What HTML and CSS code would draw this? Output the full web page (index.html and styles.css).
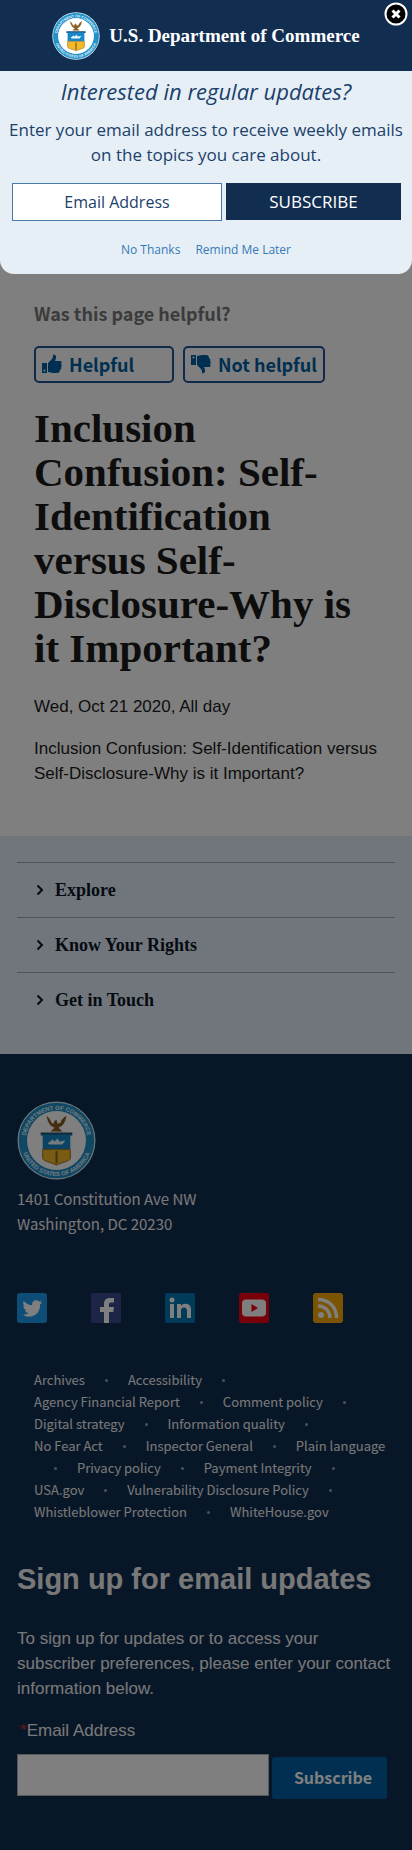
FILE: index.html
```html
<!DOCTYPE html>
<html lang="en">
<head>
<meta charset="utf-8">
<meta name="viewport" content="width=device-width, initial-scale=1">
<title>U.S. Department of Commerce</title>
<link rel="stylesheet" href="styles.css">
</head>
<body>
<svg class="defs" aria-hidden="true">
  <symbol id="seal" class="seal" viewBox="0 0 80 80">
    <circle cx="40" cy="40" r="39.5" fill="#d9eef8"/>
    <circle cx="40" cy="40" r="34" fill="none" stroke="#2191c9" stroke-width="8.5"/>
    <path id="arc-top" d="M9 46A31.500 31.500 0 1 1 71 46" fill="none"/>
    <path id="arc-bottom" d="M5 49A36.200 36.200 0 0 0 75 49" fill="none"/>
    <text class="seal-text"><textPath href="#arc-top" startOffset="50%">DEPARTMENT OF COMMERCE</textPath></text>
    <text class="seal-text"><textPath href="#arc-bottom" startOffset="50%">UNITED STATES OF AMERICA</textPath></text>
    <circle cx="40" cy="40" r="29.5" fill="#fff"/>
    <path d="M30 15c1 7 4 11 8 12l-4 4h12l-4-4c4-1 7-5 8-12-3 2-5 4-6 7l-3 1-1-4-2 1-1 3-2-1c-1-3-3-5-5-7z" fill="#8a5b20"/>
    <path d="M24 32h32v3H24z" fill="#24557c"/>
    <path d="M26 34h28v15H26z" fill="#1787c9"/>
    <path d="M26 49h28v9c0 3-9 4-14 7-5-3-14-4-14-7z" fill="#f2b928" stroke="#9b711c" stroke-width="1"/>
    <path d="M39 51h2v12h-2z" fill="#8a5b20"/>
    <path d="M31 43l5-4 2 2 3-3 2 3 6-1-3 4H33z" fill="#e8f6fd"/>
  </symbol>
</svg>

<div class="page">
  <main class="content">
    <p class="question">Was this page helpful?</p>
    <div class="votes">
      <button class="vote" type="button">
        <svg class="thumb" viewBox="0 0 20 20" aria-hidden="true"><path d="M0 9h5v10H0z M6 9l4-4c1-1 1-3 1-4 3-1 4 2 2 6h5c2 0 2 2 1 3 1 1 1 2 0 3 1 1 0 2-1 3 0 2-1 3-3 3h-4c-2 0-3-1-5-1z"/><circle cx="2.500" cy="16.500" r="1" class="pin"/></svg>
        Helpful
      </button>
      <button class="vote" type="button">
        <svg class="thumb" viewBox="0 0 20 20" aria-hidden="true"><path d="M0 1h5v10H0z M6 11l4 4c1 1 1 3 1 4 3 1 4-2 2-6h5c2 0 2-2 1-3 1-1 1-2 0-3 1-1 0-2-1-3 0-2-1-3-3-3h-4c-2 0-3 1-5 1z"/><circle cx="2.500" cy="3.500" r="1" class="pin"/></svg>
        Not helpful
      </button>
    </div>
    <h1 class="title">Inclusion Confusion: Self-Identification versus Self-Disclosure-Why is it Important?</h1>
    <p class="text">Wed, Oct 21 2020, All day</p>
    <p class="text">Inclusion Confusion: Self-Identification versus Self-Disclosure-Why is it Important?</p>
  </main>

  <nav class="menu" aria-label="Footer sections">
    <button class="menu-item" type="button"><svg class="chevron" viewBox="0 0 8 12" aria-hidden="true"><path d="M1.500 1.500L6 6l-4.500 4.500"/></svg>Explore</button>
    <button class="menu-item" type="button"><svg class="chevron" viewBox="0 0 8 12" aria-hidden="true"><path d="M1.500 1.500L6 6l-4.500 4.500"/></svg>Know Your Rights</button>
    <button class="menu-item" type="button"><svg class="chevron" viewBox="0 0 8 12" aria-hidden="true"><path d="M1.500 1.500L6 6l-4.500 4.500"/></svg>Get in Touch</button>
  </nav>

  <footer class="footer">
    <svg class="footer-seal" role="img" aria-label="Department of Commerce seal"><use href="#seal"/></svg>
    <address class="address">1401 Constitution Ave NW<br>Washington, DC 20230</address>
    <div class="social">
      <a href="#" aria-label="Twitter"><svg viewBox="0 0 30 30"><rect width="30" height="30" rx="3" fill="#1d9bf0"/><path d="M25 9c-1 .4-1.600.6-2.300.6.900-.5 1.400-1.200 1.700-2.200-.8.500-1.600.8-2.500 1-2.600-2.600-7.500-.7-6.700 3.800-3.300-.1-6.200-1.700-8.400-4.300-1.200 2-.6 4.300 1.300 5.600-.7 0-1.300-.2-1.800-.5 0 2 1.400 3.700 3.300 4.100-.6.200-1.200.2-1.800.1.500 1.600 2 2.800 3.800 2.800-1.700 1.300-3.700 1.900-6 1.700 8 4.900 17.800.2 17.500-10.200.8-.6 1.500-1.400 1.900-2.500z" fill="#fff"/></svg></a>
      <a href="#" aria-label="Facebook"><svg viewBox="0 0 30 30"><rect width="30" height="30" rx="2" fill="#3b4a8c"/><path d="M13 30V19H9v-5h4v-3c0-4 2-6 6-6h4v4.500h-3c-1.500 0-2 .7-2 2V14h5l-.7 5H18v11z" fill="#fff"/></svg></a>
      <a href="#" aria-label="LinkedIn"><svg viewBox="0 0 30 30"><rect width="30" height="30" rx="2" fill="#0077b5"/><circle cx="7" cy="7" r="2.500" fill="#fff"/><path d="M5 11h4v14H5zM12 11h4v2c2-3.500 10-3.500 10 3.500V25h-4v-7.500c0-4-6-4-6 0V25h-4z" fill="#fff"/></svg></a>
      <a href="#" aria-label="YouTube"><svg viewBox="0 0 30 30"><rect width="30" height="30" rx="3" fill="#f00010"/><rect x="3" y="6.500" width="24" height="17" rx="4" fill="#fff"/><path d="M12.500 11v8l6.500-4z" fill="#f00010"/></svg></a>
      <a href="#" aria-label="RSS"><svg viewBox="0 0 30 30"><rect width="30" height="30" rx="3" fill="#f5a800"/><circle cx="8" cy="22" r="3" fill="#fff"/><path d="M5 13c7 0 12 5 12 12M5 6.500C16 6.500 23.500 14 23.500 25" fill="none" stroke="#fff" stroke-width="3.500"/></svg></a>
    </div>
    <ul class="links">
      <li><a href="#">Archives</a></li><li class="dot"></li>
      <li><a href="#">Accessibility</a></li><li class="dot"></li>
      <li><a href="#">Agency Financial Report</a></li><li class="dot"></li>
      <li><a href="#">Comment policy</a></li><li class="dot"></li>
      <li><a href="#">Digital strategy</a></li><li class="dot"></li>
      <li><a href="#">Information quality</a></li><li class="dot"></li>
      <li><a href="#">No Fear Act</a></li><li class="dot"></li>
      <li><a href="#">Inspector General</a></li><li class="dot"></li>
      <li><a href="#">Plain language</a></li><li class="dot"></li>
      <li><a href="#">Privacy policy</a></li><li class="dot"></li>
      <li><a href="#">Payment Integrity</a></li><li class="dot"></li>
      <li><a href="#">USA.gov</a></li><li class="dot"></li>
      <li><a href="#">Vulnerability Disclosure Policy</a></li><li class="dot"></li>
      <li><a href="#">Whistleblower Protection</a></li><li class="dot"></li>
      <li><a href="#">WhiteHouse.gov</a></li>
    </ul>
    <form class="signup">
      <h2 class="signup-title">Sign up for email updates</h2>
      <p class="signup-text">To sign up for updates or to access your subscriber preferences, please enter your contact information below.</p>
      <label class="signup-label" for="signup-email"><span class="required">*</span>Email Address</label>
      <div class="signup-row">
        <input class="signup-input" id="signup-email" type="email">
        <button class="signup-button" type="button">Subscribe</button>
      </div>
    </form>
  </footer>
</div>

<div class="overlay">
  <section class="popup" role="dialog" aria-label="Email updates">
    <header class="popup-header">
      <svg class="popup-seal" aria-hidden="true"><use href="#seal"/></svg>
      <span class="brand">U.S. Department of Commerce</span>
      <button class="close" type="button" aria-label="Close"><svg viewBox="0 0 24 24"><circle cx="12" cy="12" r="10.500" fill="#000" stroke="#fff" stroke-width="2"/><path d="M8.500 8.500l7 7M15.500 8.500l-7 7" stroke="#fff" stroke-width="3"/></svg></button>
    </header>
    <form class="popup-body">
      <h2 class="popup-title">Interested in regular updates?</h2>
      <p class="popup-text">Enter your email address to receive weekly emails on the topics you care about.</p>
      <div class="popup-row">
        <input class="popup-input" type="email" placeholder="Email Address" aria-label="Email Address">
        <button class="popup-button" type="button">SUBSCRIBE</button>
      </div>
      <div class="popup-links"><a href="#">No Thanks</a><a href="#">Remind Me Later</a></div>
    </form>
  </section>
</div>
</body>
</html>
```

FILE: styles.css
```css
* { box-sizing: border-box; }
body {
  margin: 0;
  position: relative;
  background: #fff;
  color: #1b1b1b;
  font-family: "Liberation Sans", Arial, sans-serif;
  font-size: 17px;
  line-height: 25px;
}
h1, h2, p, ul { margin: 0; padding: 0; }
button, input { font: inherit; margin: 0; }
a { color: inherit; text-decoration: none; }
.defs { position: absolute; width: 0; height: 0; overflow: visible; }
.seal, .footer-seal, .popup-seal { overflow: visible; }
.seal-text { fill: #e3f5fd; font-family: "Liberation Sans", sans-serif; font-size: 6px; font-weight: 700; text-anchor: middle; }

.content { padding: 301px 34px 50px; }
.question {
  font-family: "Noto Sans CJK SC", sans-serif;
  font-size: 18px;
  font-weight: 700;
  color: #767676;
}
.votes { display: flex; gap: 9px; margin-top: 20px; }
.vote {
  display: flex;
  align-items: center;
  gap: 7px;
  min-width: 140px;
  height: 37px;
  padding: 0 6px 1px;
  border: 2px solid #205493;
  border-radius: 5px;
  background: none;
  color: #005ea2;
  font-family: "Noto Sans CJK SC", sans-serif;
  font-size: 18px;
  font-weight: 700;
  white-space: nowrap;
}
.thumb { width: 20px; height: 20px; fill: currentColor; }
.pin { fill: #fff; }
.title {
  margin: 23px 0 24px;
  font-family: "Liberation Serif", serif;
  font-size: 41px;
  line-height: 44px;
  font-weight: 700;
}
.text + .text { margin-top: 17px; }

.menu { padding: 26px 17px 27px; background: #e3ecf8; }
.menu-item {
  display: flex;
  align-items: center;
  gap: 11px;
  width: 100%;
  height: 55px;
  padding: 0 19px;
  border: 0;
  border-top: 1px solid #9ea5b2;
  background: none;
  color: #0b1626;
  font-family: "Liberation Serif", serif;
  font-size: 18px;
  font-weight: 700;
}
.chevron { width: 8px; height: 12px; fill: none; stroke: currentColor; stroke-width: 2; }

.footer { padding: 47px 17px 53px; background: #112e51; color: #f1f1f1; }
.footer-seal { display: block; width: 79px; height: 79px; }
.address {
  margin-top: 6px;
  font-family: "Noto Sans CJK SC", sans-serif;
  font-size: 15px;
  font-style: normal;
}
.social { display: flex; gap: 44px; margin-top: 57px; }
.social a { width: 30px; height: 30px; }
.social svg { display: block; width: 30px; height: 30px; }
.links {
  display: flex;
  flex-wrap: wrap;
  margin: 46px 9px 0 17px;
  list-style: none;
  font-family: "Noto Sans CJK SC", sans-serif;
  font-size: 13px;
  line-height: 22px;
}
.dot { display: flex; align-items: center; justify-content: center; width: 43px; }
.dot::before { content: ""; width: 3px; height: 3px; border-radius: 50%; background: #8ba6ca; }
.signup-title { margin-top: 38px; font-size: 29px; line-height: 36px; }
.signup-text { margin-top: 29px; }
.signup-label { display: block; margin-top: 17px; padding-left: 3px; }
.required { color: #d8213b; }
.signup-row { display: flex; gap: 3px; margin: 11px 8px 0 0; }
.signup-input { flex: 1; min-width: 0; height: 42px; padding: 0 8px; border: 1px solid #aeb0b5; background: #fff; }
.signup-button {
  width: 115px;
  height: 42px;
  margin-top: 3px;
  padding: 0 0 2px 7px;
  border: 0;
  border-radius: 3px;
  background: #005ea2;
  color: #fff;
  font-family: "Noto Sans CJK SC", sans-serif;
  font-size: 16px;
  font-weight: 700;
}

.overlay { position: absolute; inset: 0; background: rgba(0, 0, 0, .5); }
.popup {
  overflow: hidden;
  border-radius: 0 0 14px 14px;
  background: #e7eff6;
  color: #1b416b;
  font-family: "Open Sans", sans-serif;
  text-align: center;
}
.popup-header {
  position: relative;
  display: flex;
  align-items: center;
  justify-content: center;
  gap: 9px;
  height: 71px;
  background: #112e51;
}
.popup-seal { width: 48px; height: 48px; }
.brand { color: #fff; font-family: "Liberation Serif", serif; font-size: 19px; font-weight: 700; }
.close { position: absolute; top: 2px; right: 4px; width: 24px; height: 24px; padding: 0; border: 0; background: none; }
.close svg { display: block; width: 24px; height: 24px; }
.popup-body { padding: 5px 3px 12px; }
.popup-title { font-size: 22px; line-height: 30px; font-weight: 400; font-style: italic; }
.popup-text { margin-top: 11px; }
.popup-row { display: grid; grid-template-columns: 6fr 5fr; gap: 4px; margin-top: 16px; padding: 0 8px 0 9px; }
.popup-input {
  min-width: 0;
  height: 38px;
  padding: 0 8px;
  border: 1px solid #4a78ab;
  background: #fff;
  font-size: 16px;
  text-align: center;
}
.popup-input::placeholder { color: #1b416b; opacity: 1; }
.popup-button { height: 37px; padding: 0; border: 0; background: #112e51; color: #fff; font-size: 17px; }
.popup-links { display: flex; justify-content: center; gap: 15px; margin-top: 16px; font-size: 12px; color: #337ab7; }
```
